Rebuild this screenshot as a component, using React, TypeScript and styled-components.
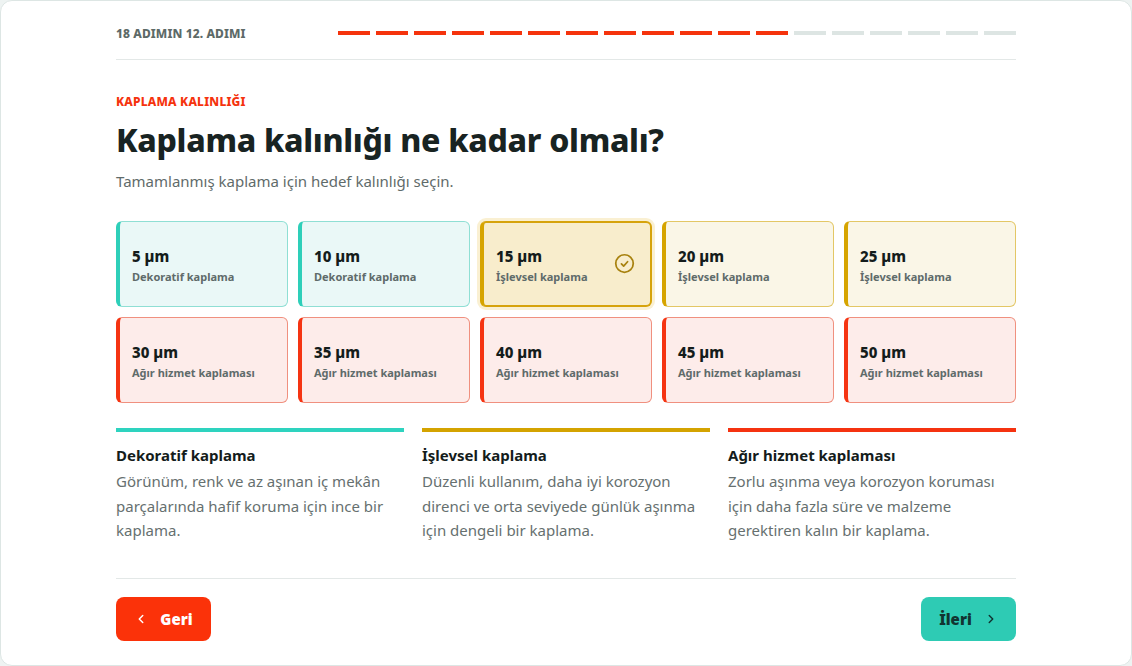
import React from "react";
import styled, { createGlobalStyle, css } from "styled-components";

type Kind = "deco" | "func" | "heavy";

const palette: Record<Kind, { bg: string; border: string; edge: string; bar: string }> = {
  deco: { bg: "#eaf8f7", border: "#8fdfd4", edge: "#2ecfb9", bar: "#2ed3bf" },
  func: { bg: "#faf6e7", border: "#e3c766", edge: "#d6a400", bar: "#d4a300" },
  heavy: { bg: "#fdecea", border: "#f0907f", edge: "#f53412", bar: "#f53210" },
};

const GlobalStyle = createGlobalStyle`
  * { box-sizing: border-box; }
  html, body { margin: 0; padding: 0; background: #eef3f2; }
  body { font-family: "Noto Sans", "Open Sans", sans-serif; color: #182322; }
`;

const Shell = styled.div`
  width: 1132px;
  height: 666px;
  background: #fff;
  border: 1px solid #dde6e4;
  border-radius: 12px;
  padding: 22px 115px 24px 115px;
  display: flex;
  flex-direction: column;
`;

const TopBar = styled.div`
  display: flex;
  align-items: center;
  justify-content: space-between;
  height: 20px;
  padding-bottom: 16px;
  border-bottom: 1px solid #e3e8e7;
  box-sizing: content-box;
`;

const StepLabel = styled.span`
  font-size: 12px;
  font-weight: 800;
  letter-spacing: 0.1px;
  color: #5d6a68;
  text-transform: uppercase;
`;

const Progress = styled.div`
  display: flex;
  gap: 6px;
  width: 678px;
`;

const Segment = styled.span<{ $done: boolean }>`
  flex: 1;
  height: 4px;
  background: ${(p) => (p.$done ? "#f5330d" : "#dde5e3")};
`;

const Eyebrow = styled.div`
  margin-top: 34px;
  font-size: 12px;
  line-height: 16px;
  font-weight: 800;
  color: #f5330d;
  letter-spacing: 0.2px;
`;

const Title = styled.h1`
  margin: 9px 0 0;
  font-size: 32px;
  line-height: 42px;
  font-weight: 800;
  color: #182322;
  letter-spacing: -0.3px;
`;

const Lead = styled.p`
  margin: 9px 0 0;
  font-size: 15px;
  line-height: 22px;
  color: #5f6b6a;
`;

const Grid = styled.div`
  margin-top: 29px;
  display: grid;
  grid-template-columns: repeat(5, 1fr);
  gap: 10px;
`;

const Option = styled.div<{ $kind: Kind; $active?: boolean }>`
  position: relative;
  height: 86px;
  border-radius: 6px;
  border: 1px solid ${(p) => palette[p.$kind].border};
  border-left: 4px solid ${(p) => palette[p.$kind].edge};
  background: ${(p) => palette[p.$kind].bg};
  padding: 0 12px;
  display: flex;
  flex-direction: column;
  justify-content: center;
  ${(p) =>
    p.$active &&
    css`
      background: #f8edcc;
      border: 2px solid #d6a30c;
      border-left: 4px solid #d6a400;
      box-shadow: 0 0 0 3px #faf0d2;
    `}
`;

const Value = styled.div`
  font-size: 15px;
  line-height: 20px;
  font-weight: 800;
  color: #141c1b;
  margin-top: 3px;
`;

const Caption = styled.div`
  font-size: 11px;
  line-height: 16px;
  font-weight: 700;
  color: #5f6b6a;
  margin-top: 3px;
`;

const Check = styled.svg`
  position: absolute;
  right: 15px;
  top: 50%;
  margin-top: -11px;
  width: 21px;
  height: 21px;
`;

const Legend = styled.div`
  margin-top: 25px;
  display: grid;
  grid-template-columns: repeat(3, 1fr);
  gap: 18px;
`;

const LegendItem = styled.div<{ $kind: Kind }>`
  border-top: 4px solid ${(p) => palette[p.$kind].bar};
  padding-top: 13px;
`;

const LegendTitle = styled.div`
  font-size: 15px;
  line-height: 20px;
  font-weight: 700;
  color: #141c1b;
`;

const LegendText = styled.p`
  margin: 4px 0 0;
  font-size: 15px;
  line-height: 24.5px;
  color: #66706f;
  padding-right: 10px;
`;

const Footer = styled.div`
  margin-top: auto;
  border-top: 1px solid #e3e8e7;
  padding-top: 18px;
  display: flex;
  justify-content: space-between;
`;

const NavButton = styled.button<{ $primary?: boolean }>`
  width: 95px;
  height: 44px;
  border: none;
  border-radius: 8px;
  display: flex;
  align-items: center;
  justify-content: center;
  gap: 12px;
  font-family: inherit;
  font-size: 15px;
  font-weight: 900;
  cursor: pointer;
  background: ${(p) => (p.$primary ? "#2ecbb4" : "#fb3209")};
  color: ${(p) => (p.$primary ? "#123431" : "#ffffff")};
  svg {
    width: 14px;
    height: 14px;
  }
`;

const options: { value: number; kind: Kind; label: string }[] = [
  { value: 5, kind: "deco", label: "Dekoratif kaplama" },
  { value: 10, kind: "deco", label: "Dekoratif kaplama" },
  { value: 15, kind: "func", label: "İşlevsel kaplama" },
  { value: 20, kind: "func", label: "İşlevsel kaplama" },
  { value: 25, kind: "func", label: "İşlevsel kaplama" },
  { value: 30, kind: "heavy", label: "Ağır hizmet kaplaması" },
  { value: 35, kind: "heavy", label: "Ağır hizmet kaplaması" },
  { value: 40, kind: "heavy", label: "Ağır hizmet kaplaması" },
  { value: 45, kind: "heavy", label: "Ağır hizmet kaplaması" },
  { value: 50, kind: "heavy", label: "Ağır hizmet kaplaması" },
];

const legend: { kind: Kind; title: string; text: string }[] = [
  {
    kind: "deco",
    title: "Dekoratif kaplama",
    text: "Görünüm, renk ve az aşınan iç mekân parçalarında hafif koruma için ince bir kaplama.",
  },
  {
    kind: "func",
    title: "İşlevsel kaplama",
    text: "Düzenli kullanım, daha iyi korozyon direnci ve orta seviyede günlük aşınma için dengeli bir kaplama.",
  },
  {
    kind: "heavy",
    title: "Ağır hizmet kaplaması",
    text: "Zorlu aşınma veya korozyon koruması için daha fazla süre ve malzeme gerektiren kalın bir kaplama.",
  },
];

export default function App() {
  const total = 18;
  const current = 12;
  const selected = 15;

  return (
    <>
      <GlobalStyle />
      <Shell>
        <TopBar>
          <StepLabel>
            {total} adımın {current}. adımı
          </StepLabel>
          <Progress>
            {Array.from({ length: total }, (_, i) => (
              <Segment key={i} $done={i < current} />
            ))}
          </Progress>
        </TopBar>

        <Eyebrow>KAPLAMA KALINLIĞI</Eyebrow>
        <Title>Kaplama kalınlığı ne kadar olmalı?</Title>
        <Lead>Tamamlanmış kaplama için hedef kalınlığı seçin.</Lead>

        <Grid>
          {options.map((o) => (
            <Option key={o.value} $kind={o.kind} $active={o.value === selected}>
              <Value>{o.value} µm</Value>
              <Caption>{o.label}</Caption>
              {o.value === selected && (
                <Check viewBox="0 0 24 24" fill="none" stroke="#a8820f" strokeWidth="2" strokeLinecap="round" strokeLinejoin="round">
                  <circle cx="12" cy="12" r="10" />
                  <path d="M8.5 12.5l2.5 2.5 4.5-5" />
                </Check>
              )}
            </Option>
          ))}
        </Grid>

        <Legend>
          {legend.map((l) => (
            <LegendItem key={l.kind} $kind={l.kind}>
              <LegendTitle>{l.title}</LegendTitle>
              <LegendText>{l.text}</LegendText>
            </LegendItem>
          ))}
        </Legend>

        <Footer>
          <NavButton>
            <svg viewBox="0 0 24 24" fill="none" stroke="currentColor" strokeWidth="2.5" strokeLinecap="round" strokeLinejoin="round">
              <path d="M15 18l-6-6 6-6" />
            </svg>
            Geri
          </NavButton>
          <NavButton $primary>
            İleri
            <svg viewBox="0 0 24 24" fill="none" stroke="currentColor" strokeWidth="2.5" strokeLinecap="round" strokeLinejoin="round">
              <path d="M9 18l6-6-6-6" />
            </svg>
          </NavButton>
        </Footer>
      </Shell>
    </>
  );
}
